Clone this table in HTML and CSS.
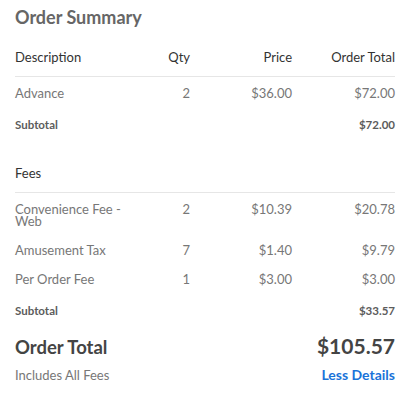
FILE: index.html
```html
<!DOCTYPE html>
<html lang="en">

  <head>
    <meta charset="UTF-8">
    <meta name="viewport" content="width=device-width, initial-scale=1.0">
    <title>Order Summary</title>
    <link rel="stylesheet" href="styles.css">
  </head>

  <body>
    <div class="summary">
      <h2 class="summary-title">Order Summary</h2>

      <div class="section">
        <div class="row head">
          <div>Description</div>
          <div class="num">Qty</div>
          <div class="num">Price</div>
          <div class="num">Order Total</div>
        </div>
        <div class="row item">
          <div>Advance</div>
          <div class="num">2</div>
          <div class="num">$36.00</div>
          <div class="num">$72.00</div>
        </div>
        <div class="row subtotal">
          <div>Subtotal</div>
          <div></div>
          <div></div>
          <div class="num">$72.00</div>
        </div>
      </div>

      <div class="section fees">
        <div class="row head">
          <div>Fees</div>
        </div>
        <div class="row item">
          <div>Convenience Fee - Web</div>
          <div class="num">2</div>
          <div class="num">$10.39</div>
          <div class="num">$20.78</div>
        </div>
        <div class="row item">
          <div>Amusement Tax</div>
          <div class="num">7</div>
          <div class="num">$1.40</div>
          <div class="num">$9.79</div>
        </div>
        <div class="row item">
          <div>Per Order Fee</div>
          <div class="num">1</div>
          <div class="num">$3.00</div>
          <div class="num">$3.00</div>
        </div>
        <div class="row subtotal">
          <div>Subtotal</div>
          <div></div>
          <div></div>
          <div class="num">$33.57</div>
        </div>
      </div>

      <div class="total">
        <div class="total-line">
          <span class="total-label">Order Total</span>
          <span class="total-amount">$105.57</span>
        </div>
        <div class="total-line note-line">
          <span class="total-note">Includes All Fees</span>
          <a class="toggle" href="#">Less Details</a>
        </div>
      </div>
    </div>
  </body>

</html>
```

FILE: styles.css
```css
body {
  margin: 0;
  background-color: #fff;
  font-family: Lato, "Open Sans", sans-serif;
  color: #666;
}

.summary {
  padding: 0 15px;
}

.summary-title {
  margin: 0;
  padding-top: 5px;
  font-size: 18px;
  line-height: 24px;
  font-weight: 700;
  color: #666;
}

.section {
  margin-top: 22px;
}

.section.fees {
  margin-top: 36px;
}

.row {
  display: grid;
  grid-template-columns: 120px 55px 102px 103px;
  font-size: 13px;
  line-height: 12px;
}

.num {
  text-align: right;
}

.row.head {
  padding-bottom: 13px;
  border-bottom: 1px solid #e6e6e6;
  color: #333;
}

.row.item {
  padding: 10px 0 7px;
  color: #777;
}

.row.subtotal {
  padding-top: 13px;
  font-size: 11.5px;
  font-weight: 700;
  color: #5c5c5c;
}

.total {
  margin-top: 16px;
}

.total-line {
  display: flex;
  justify-content: space-between;
  align-items: baseline;
}

.note-line {
  margin-top: 8px;
}

.total-label {
  font-size: 18.5px;
  font-weight: 700;
  color: #444;
}

.total-amount {
  font-size: 21px;
  font-weight: 700;
  color: #444;
}

.total-note {
  font-size: 13px;
  color: #777;
}

.toggle {
  font-size: 14px;
  font-weight: 700;
  color: #1a73d9;
  text-decoration: none;
}
```
